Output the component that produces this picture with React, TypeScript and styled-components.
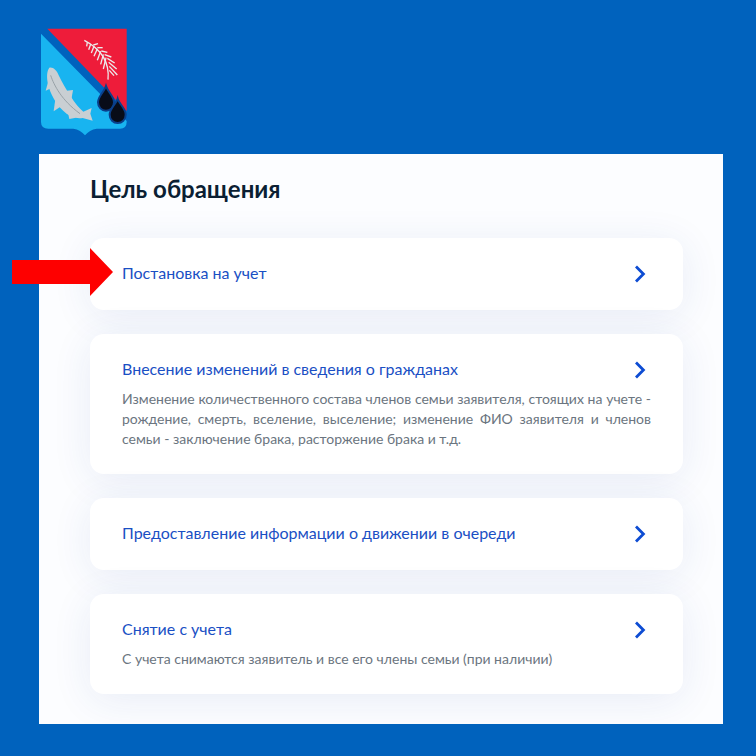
import React from "react";
import styled, { createGlobalStyle } from "styled-components";

const GlobalStyle = createGlobalStyle`
  html, body {
    margin: 0;
    padding: 0;
    background: #0062bd;
    font-family: "Lato", "Noto Sans", sans-serif;
  }
`;

const Page = styled.div`
  position: relative;
  width: 756px;
  height: 756px;
  overflow: hidden;
  padding-top: 27px;
  box-sizing: border-box;
`;

const Crest = styled.svg`
  display: block;
  width: 90px;
  height: 110px;
  margin: 0 0 17px 40px;
`;

const Panel = styled.main`
  width: 684px;
  height: 570px;
  margin-left: 39px;
  box-sizing: border-box;
  padding: 21px 40px 0 51px;
  background: #fcfdff;
  overflow: hidden;
`;

const Title = styled.h1`
  margin: 0 0 35px;
  font-size: 24px;
  line-height: 28px;
  font-weight: 700;
  color: #0b1f33;
`;

const List = styled.div`
  display: flex;
  flex-direction: column;
  gap: 24px;
`;

const Card = styled.a<{ $height: number }>`
  display: block;
  height: ${(p) => p.$height}px;
  box-sizing: border-box;
  padding: 23px 32px 0;
  background: #fff;
  border-radius: 14px;
  box-shadow: 0 6px 40px rgba(32, 72, 160, 0.09);
`;

const CardHead = styled.div`
  display: flex;
  align-items: center;
  justify-content: space-between;
  height: 24px;
  padding-right: 5px;
`;

const CardTitle = styled.h2`
  margin: 0;
  font-size: 16px;
  line-height: 24px;
  font-weight: 400;
  color: #1a4fc4;
`;

const Description = styled.p<{ $justify?: boolean }>`
  margin: 8px 0 0;
  font-size: 14px;
  line-height: 20px;
  color: #6b7580;
  text-align: ${(p) => (p.$justify ? "justify" : "left")};
`;

const ChevronIcon = styled.svg`
  width: 12px;
  height: 18px;
  margin-top: 2px;
`;

const Pointer = styled.svg`
  position: absolute;
  left: 12px;
  top: 248px;
  width: 102px;
  height: 48px;
`;

const Chevron = () => (
  <ChevronIcon viewBox="0 0 12 18" fill="none">
    <path d="M2 1.6l7.4 7.4L2 16.4" stroke="#0d4cd3" strokeWidth="2.8" />
  </ChevronIcon>
);

const items = [
  { title: "Постановка на учет", height: 72 },
  {
    title: "Внесение изменений в сведения о гражданах",
    height: 140,
    text: "Изменение количественного состава членов семьи заявителя, стоящих на учете - рождение, смерть, вселение, выселение; изменение ФИО заявителя и членов семьи - заключение брака, расторжение брака и т.д.",
    justify: true,
  },
  { title: "Предоставление информации о движении в очереди", height: 72 },
  {
    title: "Снятие с учета",
    height: 100,
    text: "С учета снимаются заявитель и все его члены семьи (при наличии)",
  },
];

// barbs of the feather on the crest: [x1, y1, x2, y2]
const barbs = [
  [172, 66, 170, 78], [182, 72, 176, 88], [192, 78, 184, 98], [202, 85, 192, 108],
  [212, 93, 202, 120], [220, 102, 212, 132], [228, 112, 220, 146],
  [190, 74, 204, 70], [202, 82, 218, 82], [214, 92, 232, 96], [224, 103, 244, 110],
  [232, 114, 254, 128], [236, 126, 260, 146], [238, 138, 262, 164], [238, 150, 252, 166],
];

export default function App() {
  return (
    <>
      <GlobalStyle />
      <Page>
        <Crest viewBox="30 20 270 330">
          <path d="M52 25H290V272Z" fill="#ee1c3a" />
          <path
            d="M33 40L290 302V305Q290 325 270 325H200Q178 328 165 345Q152 328 130 325H55Q33 325 33 305Z"
            fill="#18b4f0"
          />
          <g fill="#c9cfd3">
            <path d="M58 142C70 140 80 150 86 165C96 185 108 208 122 228C134 248 148 264 160 274L185 263L181 280L188 301L158 293C138 297 116 288 98 270C78 250 60 220 54 190C50 172 50 152 58 142Z" />
            <path d="M104 212L129 209L124 238Z" />
            <path d="M56 178L47 211L66 202Z" />
            <path d="M76 236L71 273L96 256Z" />
            <path d="M114 278L118 296L138 292Z" />
          </g>
          <path d="M62 165C72 195 95 240 150 280" fill="none" stroke="#98a2a8" strokeWidth="3" />
          <g stroke="#ececec" strokeWidth="4" fill="none">
            <path d="M163 60C205 82 240 118 234 178" />
            {barbs.map(([x1, y1, x2, y2]) => (
              <line key={`${x1}-${y1}-${x2}`} x1={x1} y1={y1} x2={x2} y2={y2} />
            ))}
          </g>
          <path d="M228 197C234 216 252 228 252 246C252 261 241 271 228 271C215 271 204 261 204 246C204 228 222 216 228 197Z" fill="#080c18" stroke="#0a3f8a" strokeWidth="6" />
          <path d="M263 235C268 252 287 264 287 283C287 298 276 308 263 308C250 308 239 298 239 283C239 264 258 252 263 235Z" fill="#080c18" stroke="#0a3f8a" strokeWidth="6" />
        </Crest>
        <Panel>
          <Title>Цель обращения</Title>
          <List>
            {items.map((item) => (
              <Card key={item.title} $height={item.height}>
                <CardHead>
                  <CardTitle>{item.title}</CardTitle>
                  <Chevron />
                </CardHead>
                {item.text && <Description $justify={item.justify}>{item.text}</Description>}
              </Card>
            ))}
          </List>
        </Panel>
        <Pointer viewBox="0 0 102 48">
          <path d="M0 12H78V0L101 24L78 48V36H0Z" fill="#fe0000" />
        </Pointer>
      </Page>
    </>
  );
}
